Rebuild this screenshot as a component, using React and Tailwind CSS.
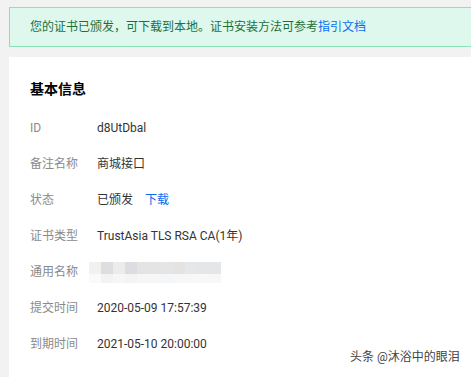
import React from 'react';

const rows = [
  { label: 'ID', value: 'd8UtDbal' },
  { label: '备注名称', value: '商城接口' },
  { label: '状态', value: 'status' },
  { label: '证书类型', value: 'TrustAsia TLS RSA CA(1年)' },
  { label: '通用名称', value: 'blur' },
  { label: '提交时间', value: '2020-05-09 17:57:39' },
  { label: '到期时间', value: '2021-05-10 20:00:00' },
];

const mosaicTop = ['#f1f1f0', '#dcdedf', '#ececea', '#dcdde0', '#e4e4e4', '#e6e3e3', '#e3e5e7', '#e5e3e2', '#e6e7e9', '#e5e6e8', '#e4e6e8'];
const mosaicBottom = ['#fafafa', '#f3f3f3', '#f6f6f6', '#f4f4f5', '#f6f6f6', '#f7f6f6', '#f5f6f8', '#f7f7f7', '#f7f7f8', '#f8f8f8', '#f7f7f8'];

function Blurred() {
  return (
    <div className="flex flex-col">
      <div className="flex">
        {mosaicTop.map((c, i) => (
          <div key={i} className="w-[12px] h-[12px]" style={{ background: c }} />
        ))}
      </div>
      <div className="flex">
        {mosaicBottom.map((c, i) => (
          <div key={i} className="w-[12px] h-[9px]" style={{ background: c }} />
        ))}
      </div>
    </div>
  );
}

export default function App() {
  return (
    <div
      className="relative w-[471px] h-[377px] overflow-hidden bg-[#f2f2f2] pl-[9px] pt-[7px] text-[12px]"
      style={{ fontFamily: "Roboto, 'Noto Sans CJK SC', sans-serif" }}
    >
      {/* Notice */}
      <div className="h-[40px] w-[480px] flex items-center border border-[#8ce1b9] bg-[#dff8ee] pl-[20px] text-[#1e6f3a]">
        您的证书已颁发，可下载到本地。证书安装方法可参考<span className="text-[#0a6cf0]">指引文档</span>
      </div>

      {/* Card */}
      <div className="mt-[10px] w-[480px] h-[340px] bg-white pl-[21px] pt-[22px]">
        <h2 className="text-[14px] leading-[20px] font-bold text-black">基本信息</h2>
        <div className="mt-[11px] flex flex-col">
          {rows.map((r) => (
            <div key={r.label} className="flex items-center h-[36px]">
              <span className="w-[67px] text-[#8a8a8a]">{r.label}</span>
              {r.value === 'status' ? (
                <span className="text-[#333]">
                  已颁发<span className="ml-[12px] text-[#0a6cf0]">下载</span>
                </span>
              ) : r.value === 'blur' ? (
                <div className="-ml-[8px]">
                  <Blurred />
                </div>
              ) : (
                <span className="text-[#333]">{r.value}</span>
              )}
            </div>
          ))}
        </div>
      </div>

      {/* Watermark */}
      <div className="absolute left-[350px] top-[348px] text-[12px] text-[#444]">头条 @沐浴中的眼泪</div>
    </div>
  );
}
